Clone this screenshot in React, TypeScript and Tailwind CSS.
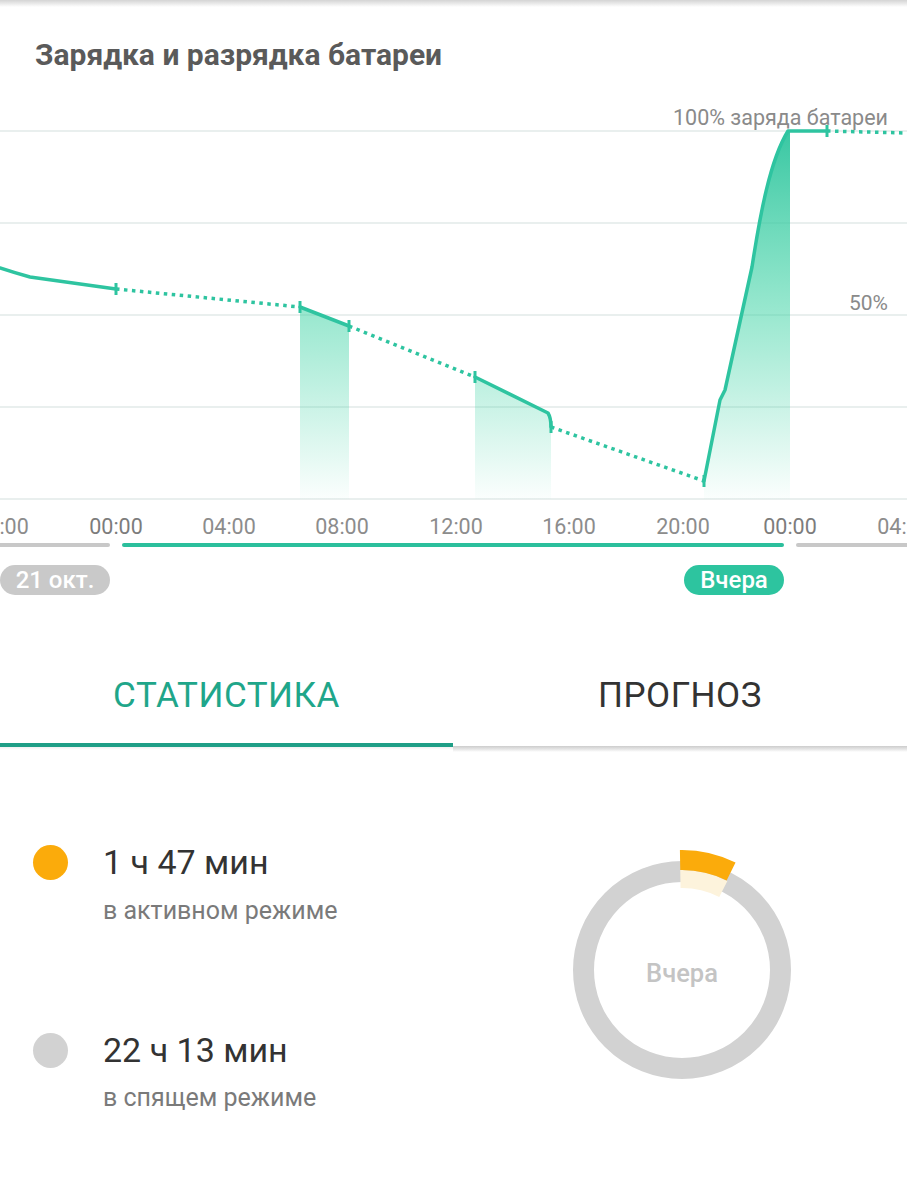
import React from "react";

const TEAL = "#2ec4a0";

function sector(cx: number, cy: number, r1: number, r2: number, a0: number, a1: number) {
  const p = (r: number, d: number) => {
    const t = (d * Math.PI) / 180;
    return `${(cx + r * Math.sin(t)).toFixed(2)} ${(cy - r * Math.cos(t)).toFixed(2)}`;
  };
  return `M ${p(r2, a0)} A ${r2} ${r2} 0 0 1 ${p(r2, a1)} L ${p(r1, a1)} A ${r1} ${r1} 0 0 0 ${p(r1, a0)} Z`;
}

function Chart() {
  const grid = [131, 223, 315, 407, 499];
  const ticks: [number, number][] = [
    [116, 289],
    [300, 307],
    [349, 326],
    [475, 377],
    [551, 427],
    [704, 481],
    [827, 131],
  ];
  const labels: [string, number][] = [
    ["20:00", 2],
    ["00:00", 116],
    ["04:00", 229],
    ["08:00", 342],
    ["12:00", 456],
    ["16:00", 569],
    ["20:00", 683],
    ["00:00", 790],
    ["04:00", 904],
  ];
  const dot = { stroke: TEAL, strokeWidth: 3.5, strokeDasharray: "3.5 4.5", fill: "none" };
  const solid = { stroke: TEAL, strokeWidth: 3.5, fill: "none", strokeLinejoin: "round" as const, strokeLinecap: "round" as const };
  return (
    <svg width={907} height={440} viewBox="0 100 907 440" className="block">
      <defs>
        <linearGradient id="fillg" gradientUnits="userSpaceOnUse" x1="0" y1="131" x2="0" y2="499">
          <stop offset="0" stopColor="#2fc49e" stopOpacity="0.95" />
          <stop offset="0.5" stopColor="#3dd3a4" stopOpacity="0.52" />
          <stop offset="1" stopColor="#3dd3a4" stopOpacity="0.02" />
        </linearGradient>
      </defs>
      {grid.map((y) => (
        <line key={y} x1={0} x2={907} y1={y} y2={y} stroke="#e2eae8" strokeWidth={1.5} />
      ))}
      <path d="M300 307 L349 326 L349 499 L300 499 Z" fill="url(#fillg)" />
      <path d="M475 377 L548 413 Q551 418 551 427 L551 499 L475 499 Z" fill="url(#fillg)" />
      <path d="M704 481 L720 400 L725 390 L752 267 C760 215 770 160 788 131 L790 131 L790 499 L704 499 Z" fill="url(#fillg)" />

      <path d="M0 268 Q15 273 30 277 L116 289" {...solid} />
      <path d="M116 289 L300 307" {...dot} />
      <path d="M300 307 L349 326" {...solid} />
      <path d="M349 326 L475 377" {...dot} />
      <path d="M475 377 L548 413 Q551 418 551 427" {...solid} />
      <path d="M551 427 L704 481" {...dot} />
      <path d="M704 481 L720 400 L725 390 L752 267 C760 215 770 160 788 131 L827 131" {...solid} />
      <path d="M827 131 L907 133" {...dot} />
      {ticks.map(([x, y]) => (
        <line key={x} x1={x} x2={x} y1={y - 6} y2={y + 6} stroke={TEAL} strokeWidth={3} />
      ))}

      <text x={888} y={125} textAnchor="end" fontFamily="Roboto, sans-serif" fontSize={21.5} fill="#8a8a8a">
        100% заряда батареи
      </text>
      <text x={888} y={310} textAnchor="end" fontFamily="Roboto, sans-serif" fontSize={21} fill="#8a8a8a">
        50%
      </text>
      {labels.map(([t, x], i) => (
        <text
          key={i}
          x={x}
          y={534}
          textAnchor="middle"
          fontFamily="Roboto, sans-serif"
          fontSize={21.5}
          fill={t === "00:00" ? "#7c7c7c" : "#8c8c8c"}
        >
          {t}
        </text>
      ))}
    </svg>
  );
}

function Donut() {
  const cx = 131;
  const cy = 130;
  return (
    <svg width={262} height={262} viewBox="0 0 262 262" className="block">
      <circle cx={cx} cy={cy} r={98.5} fill="none" stroke="#d2d2d2" strokeWidth={21} />
      <path d={sector(cx, cy, 82, 100, -1, 27)} fill="#fdf3dc" />
      <path d={sector(cx, cy, 100, 120, -1, 26.5)} fill="#fbab0b" />
      <text x={cx} y={cy + 12} textAnchor="middle" fontFamily="Roboto, sans-serif" fontSize={25.5} fontWeight={500} fill="#c4c4c4">
        Вчера
      </text>
    </svg>
  );
}

export default function App() {
  return (
    <div className="w-[907px] h-[1200px] bg-white overflow-hidden font-['Roboto',sans-serif]">
      <div className="h-[7px] bg-gradient-to-b from-[#d4d4d4] to-white" />
      <div className="pt-[30px] pl-[35px] text-[30px] leading-[36px] font-bold text-[#5a5a5a]">
        Зарядка и разрядка батареи
      </div>
      <div className="mt-[27px]">
        <Chart />
      </div>
      <div className="mt-[3px] flex h-[4px] gap-[12px]">
        <div className="w-[110px] bg-[#c8c8c8] rounded-r-full" />
        <div className="w-[662px] bg-[#2bbf9c] rounded-full" />
        <div className="flex-1 bg-[#c8c8c8] rounded-l-full" />
      </div>
      <div className="mt-[18px] flex h-[30px]">
        <div className="w-[110px] rounded-full bg-[#c9c9c9] text-white text-[24px] font-medium flex items-center justify-center leading-none">
          21 окт.
        </div>
        <div className="ml-[574px] w-[100px] rounded-full bg-[#2dc49f] text-white text-[24px] font-medium flex items-center justify-center leading-none">
          Вчера
        </div>
      </div>
      <div className="mt-[54px]">
        <div className="flex h-[94px] items-center">
          <div className="w-[453px] text-center text-[35px] tracking-[0.5px] text-[#1fa68a]">СТАТИСТИКА</div>
          <div className="flex-1 text-center text-[35px] tracking-[0.5px] text-[#333333]">ПРОГНОЗ</div>
        </div>
        <div className="flex h-[9px]">
          <div className="w-[453px] flex flex-col">
            <div className="h-[4px] bg-[#1f9e86]" />
            <div className="h-[3px] bg-gradient-to-b from-[#f0f0f0] to-white" />
          </div>
          <div className="flex-1 pt-[3px]">
            <div className="h-[6px] bg-gradient-to-b from-[#cdcdcd] via-[#e4e4e4] to-white" />
          </div>
        </div>
      </div>
      <div className="flex pt-[88px]">
        <div className="w-[551px] pl-[33px] pt-[2px]">
          <div className="flex items-center h-[40px]">
            <div className="w-[35px] h-[35px] rounded-full bg-[#fbab0b]" />
            <div className="ml-[35px] text-[34px] leading-[40px] text-[#333333]">1 ч 47 мин</div>
          </div>
          <div className="mt-[14px] ml-[70px] text-[25px] leading-[30px] text-[#7a7a7a]">в активном режиме</div>
          <div className="mt-[104px] flex items-center h-[40px]">
            <div className="w-[35px] h-[35px] rounded-full bg-[#d2d2d2]" />
            <div className="ml-[35px] text-[34px] leading-[40px] text-[#333333]">22 ч 13 мин</div>
          </div>
          <div className="mt-[13px] ml-[70px] text-[25px] leading-[30px] text-[#7a7a7a]">в спящем режиме</div>
        </div>
        <Donut />
      </div>
    </div>
  );
}
